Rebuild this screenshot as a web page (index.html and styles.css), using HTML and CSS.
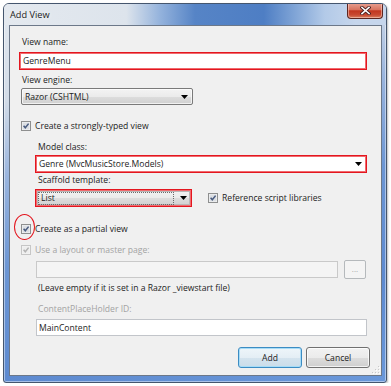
FILE: index.html
```html
<!DOCTYPE html>
<html>
<head>
<meta charset="utf-8">
<link rel="stylesheet" href="styles.css">
</head>
<body>
<div class="window">
  <div class="titlebar">
    <span class="title">Add View</span>
    <div class="close">
      <svg width="11" height="9" viewBox="0 0 11 9"><path d="M2 1.5 L9 7.5 M9 1.5 L2 7.5" stroke="#4a2020" stroke-width="3.4" stroke-linecap="square"/><path d="M2 1.5 L9 7.5 M9 1.5 L2 7.5" stroke="#ffffff" stroke-width="1.6" stroke-linecap="square"/></svg>
    </div>
  </div>
  <div class="client">
    <div class="lbl first">View name:</div>
    <div class="textbox marked name-box">GenreMenu</div>
    <div class="lbl engine-lbl">View engine:</div>
    <div class="combo engine"><span>Razor (CSHTML)</span><svg class="arrow" width="7" height="4" viewBox="0 0 7 4"><path d="M0 0 H7 L3.5 4 Z" fill="#000"/></svg></div>

    <div class="checkrow typed">
      <svg class="cb" viewBox="0 0 10 10"><rect x=".5" y=".5" width="9" height="9" fill="#f6f6f6" stroke="#8e8f8f"/><rect x="1.5" y="1.5" width="7" height="7" fill="#dcdfe3"/><path d="M2.6 4.8 L4.3 6.8 L7.6 2.6" fill="none" stroke="#4a5c80" stroke-width="1.5"/></svg>
      <span>Create a strongly-typed view</span>
    </div>

    <div class="indent">
      <div class="lbl model-lbl">Model class:</div>
      <div class="textbox marked model-box"><span>Genre (MvcMusicStore.Models)</span><svg class="arrow" width="7" height="4" viewBox="0 0 7 4"><path d="M0 0 H7 L3.5 4 Z" fill="#000"/></svg></div>
      <div class="lbl scaffold-lbl">Scaffold template:</div>
      <div class="scaffold-row">
        <div class="combo marked-combo scaffold"><span class="focus">List</span><svg class="arrow" width="7" height="4" viewBox="0 0 7 4"><path d="M0 0 H7 L3.5 4 Z" fill="#000"/></svg></div>
        <div class="checkrow ref">
          <svg class="cb" viewBox="0 0 10 10"><rect x=".5" y=".5" width="9" height="9" fill="#f6f6f6" stroke="#8e8f8f"/><rect x="1.5" y="1.5" width="7" height="7" fill="#dcdfe3"/><path d="M2.6 4.8 L4.3 6.8 L7.6 2.6" fill="none" stroke="#4a5c80" stroke-width="1.5"/></svg>
          <span>Reference script libraries</span>
        </div>
      </div>
    </div>

    <div class="checkrow partial">
      <div class="circle"></div>
      <svg class="cb" viewBox="0 0 10 10"><rect x=".5" y=".5" width="9" height="9" fill="#f6f6f6" stroke="#8e8f8f"/><rect x="1.5" y="1.5" width="7" height="7" fill="#dcdfe3"/><path d="M2.6 4.8 L4.3 6.8 L7.6 2.6" fill="none" stroke="#4a5c80" stroke-width="1.5"/></svg>
      <span>Create as a partial view</span>
    </div>

    <div class="checkrow layout disabled">
      <svg class="cb" viewBox="0 0 10 10"><rect x=".5" y=".5" width="9" height="9" fill="#f4f4f4" stroke="#c6c6c6"/><rect x="1.5" y="1.5" width="7" height="7" fill="#eeeeee"/><path d="M2.6 4.8 L4.3 6.8 L7.6 2.6" fill="none" stroke="#b4b4b4" stroke-width="1.5"/></svg>
      <span>Use a layout or master page:</span>
    </div>

    <div class="indent">
      <div class="master-row">
        <div class="textbox disabled-box master-box"></div>
        <div class="dots-btn">...</div>
      </div>
      <div class="lbl hint">(Leave empty if it is set in a Razor _viewstart file)</div>
      <div class="lbl cph-lbl muted">ContentPlaceHolder ID:</div>
      <div class="textbox plain-box cph-box">MainContent</div>
    </div>

    <div class="buttons">
      <button class="btn default">Add</button>
      <button class="btn">Cancel</button>
    </div>

    <svg class="grip" width="8" height="8" viewBox="0 0 8 8">
      <g fill="#c8c8c8"><rect x="6" y="0" width="1" height="1"/><rect x="3" y="3" width="1" height="1"/><rect x="6" y="3" width="1" height="1"/><rect x="0" y="6" width="1" height="1"/><rect x="3" y="6" width="1" height="1"/><rect x="6" y="6" width="1" height="1"/></g>
      <g fill="#ffffff"><rect x="7" y="1" width="1" height="1"/><rect x="4" y="4" width="1" height="1"/><rect x="7" y="4" width="1" height="1"/><rect x="1" y="7" width="1" height="1"/><rect x="4" y="7" width="1" height="1"/><rect x="7" y="7" width="1" height="1"/></g>
    </svg>
  </div>
</div>
</body>
</html>
```

FILE: styles.css
```css
html, body {
  margin: 0;
  padding: 0;
  background: #ffffff;
}

body {
  font-family: "Open Sans", "Noto Sans", sans-serif;
  font-size: 8.6px;
  color: #1c1c1c;
}

.window {
  margin: 3px 0 0 3px;
  width: 384px;
  height: 380px;
  box-sizing: border-box;
  border: 1px solid #45566e;
  border-radius: 6px 6px 3px 3px;
  padding: 0 4px 6px 5px;
  display: flex;
  flex-direction: column;
  background: linear-gradient(165deg, #e2e8ef 0%, #d3dce8 20%, #9ab5de 36%, #6c96d4 55%, #5d8ad0 78%, #6a98da 100%);
  box-shadow: inset 0 0 0 1px rgba(255, 255, 255, 0.45), 1px 1px 2px rgba(0, 0, 0, 0.25);
  overflow: hidden;
}

.titlebar {
  height: 21px;
  margin: 0 -4px 0 -5px;
  padding: 0 3px 0 6px;
  display: flex;
  align-items: center;
  justify-content: space-between;
  background: linear-gradient(90deg, #e4e9ef 0%, #dde4ec 32%, #93b2dc 41%, #5684c6 50%, #4e7ec4 68%, #7fa4d6 76%, #b3cae8 84%, #c6d6ec 92%);
}

.title {
  font-size: 9.2px;
  color: #1a1a1a;
  text-shadow: 0 0 4px rgba(255, 255, 255, 0.9);
}

.close {
  align-self: flex-start;
  margin-top: -1px;
  width: 36px;
  height: 16px;
  box-sizing: border-box;
  border: 1px solid #5d2620;
  border-top: none;
  border-radius: 0 0 4px 4px;
  background: linear-gradient(#e8a293 0%, #d8735f 45%, #c2361f 52%, #c84a32 80%, #d9805f 100%);
  box-shadow: inset 0 0 0 1px rgba(255, 220, 210, 0.5);
  display: flex;
  align-items: center;
  justify-content: center;
}

.client {
  position: relative;
  height: 351px;
  box-sizing: border-box;
  border: 1px solid #6c7889;
  background: #f0f0f0;
  padding: 0 14px 0 9px;
  display: flex;
  flex-direction: column;
}

.lbl {
  height: 12px;
  line-height: 12px;
  padding-left: 3px;
  white-space: nowrap;
}

.first { margin-top: 10px; }
.engine-lbl { margin-top: 4px; }

.textbox {
  box-sizing: border-box;
  height: 18px;
  line-height: 16px;
  background: #ffffff;
  border: 1px solid #abadb3;
  padding: 0 3px;
  white-space: nowrap;
  display: flex;
  align-items: center;
  justify-content: space-between;
}

.marked {
  border: 1px solid #e3161f;
  box-shadow: inset 0 0 0 1px #f16a6e;
}

.name-box { margin-top: 4px; }

.combo {
  box-sizing: border-box;
  height: 17px;
  border: 1px solid #7a7a7a;
  border-radius: 2px;
  background: linear-gradient(#f3f3f3 0%, #ebebeb 50%, #dddddd 51%, #d0d0d0 100%);
  box-shadow: inset 0 0 0 1px rgba(255, 255, 255, 0.7);
  display: flex;
  align-items: center;
  justify-content: space-between;
  padding: 0 4px 0 3px;
  white-space: nowrap;
}

.arrow { flex: none; }

.engine {
  margin-top: 2px;
  margin-left: 2px;
  width: 172px;
}

.checkrow {
  position: relative;
  height: 12px;
  display: flex;
  align-items: center;
  white-space: nowrap;
}

.cb {
  width: 10px;
  height: 10px;
  flex: none;
  margin-right: 4px;
}

.typed {
  margin-top: 15px;
  margin-left: 2px;
}

.indent {
  display: flex;
  flex-direction: column;
  margin-left: 16px;
}

.model-lbl { margin-top: 9px; }

.model-box {
  margin-top: 2px;
  padding-right: 4px;
}

.scaffold-lbl { margin-top: 1px; }

.scaffold-row {
  margin-top: 3px;
  display: flex;
  align-items: center;
}

.marked-combo {
  width: 157px;
  height: 18px;
  border: 1px solid #e3161f;
  border-radius: 0;
  box-shadow: inset 0 0 0 1px #f16a6e, inset 0 0 0 2px #b8b8b8;
  padding: 0 4px 0 2px;
}

.focus {
  flex: 1;
  margin-right: 6px;
  padding-left: 2px;
  line-height: 11px;
  border: 1px dotted #6a6a6a;
}

.ref {
  margin-left: 16px;
}

.partial {
  margin-top: 16px;
  margin-left: 2px;
}

.circle {
  position: absolute;
  left: -7px;
  top: -9px;
  width: 21px;
  height: 26px;
  box-sizing: border-box;
  border: 1.5px solid #e3161f;
  border-radius: 50%;
}

.layout {
  margin-top: 9px;
  margin-left: 2px;
}

.disabled,
.muted {
  color: #a3a3a3;
}

.master-row {
  margin-top: 5px;
  display: flex;
  align-items: flex-start;
}

.disabled-box {
  width: 302px;
  height: 17px;
  margin-left: 1px;
  background: #f4f4f4;
  border: 1px solid #c9c9c9;
}

.dots-btn {
  margin-left: 6px;
  width: 22px;
  height: 19px;
  margin-top: -1px;
  box-sizing: border-box;
  border: 1px solid #b5b9bc;
  border-radius: 2px;
  background: #f4f4f4;
  color: #a6a6a6;
  text-align: center;
  line-height: 16px;
  font-size: 8px;
}

.hint {
  margin-top: 3px;
}

.cph-lbl { margin-top: 9px; }

.plain-box {
  margin-top: 4px;
  height: 17px;
  margin-left: 1px;
  border: 1px solid #c2c5ca;
  padding-left: 2px;
}

.buttons {
  margin-top: 11px;
  margin-right: -3px;
  display: flex;
  justify-content: flex-end;
  gap: 4px;
}

.btn {
  width: 64px;
  height: 21px;
  box-sizing: border-box;
  border: 1px solid #707070;
  border-radius: 3px;
  background: linear-gradient(#f2f2f2 0%, #ebebeb 50%, #dddddd 51%, #cfcfcf 100%);
  box-shadow: inset 0 0 0 1px rgba(255, 255, 255, 0.75);
  font-family: inherit;
  font-size: 8.6px;
  color: #1c1c1c;
  padding: 0;
  line-height: 18px;
}

.btn.default {
  border-color: #3c8cc3;
  background: linear-gradient(#eef5fa 0%, #e4eef5 50%, #d4e3ee 51%, #cbdde9 100%);
  box-shadow: inset 0 0 0 1px #a7dcf7;
}

.grip {
  position: absolute;
  right: 1px;
  bottom: 1px;
}
```
